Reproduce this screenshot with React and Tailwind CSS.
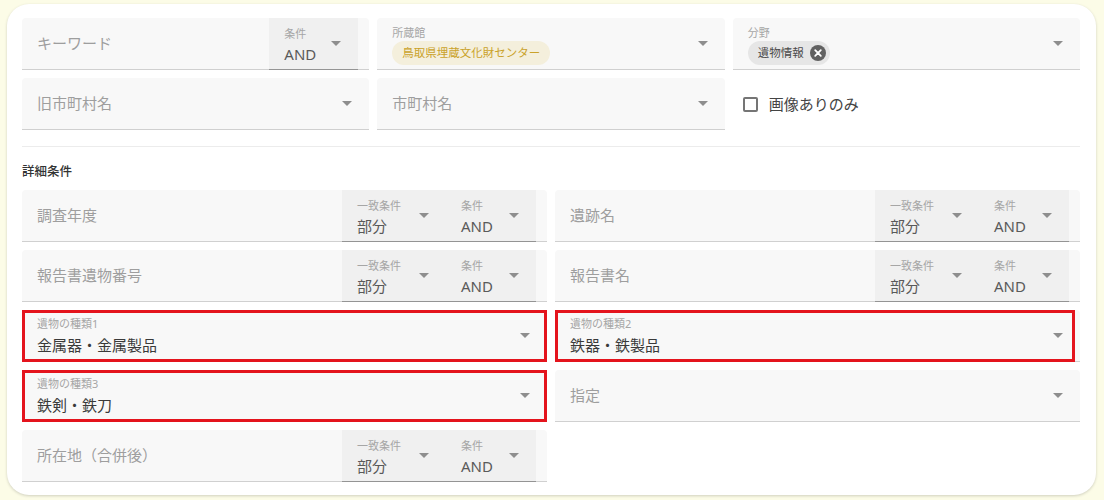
import React from 'react';

const Arrow = () => (
  <svg width="10" height="5" viewBox="0 0 10 5" className="shrink-0 fill-[#8e8e8e]">
    <path d="M0 0h10L5 5z" />
  </svg>
);

// Small select glued to the right of a field (一致条件 / 条件).
const SubSelect = ({ label, value, w }) => (
  <div className={`flex items-center border-b border-[#949494] bg-[#f0f0f0] pl-[15px] pr-[17px] ${w}`}>
    <div className="flex flex-1 flex-col self-start pt-[9px]">
      <span className="text-[11px] leading-[14px] text-[#a6a6a6]">{label}</span>
      <span className="mt-[4px] text-[15px] leading-[18px] text-[#5a5a5a]">{value}</span>
    </div>
    <Arrow />
  </div>
);

const Field = ({ placeholder, label, value, chip, subs, marked }) => (
  <div className="relative flex h-[52px] rounded-t-[4px] bg-[#f8f8f8]">
    <div className={`flex flex-1 items-center border-b border-[#d0d0d0] pl-[15px] ${subs ? '' : 'pr-[17px]'}`}>
      <div className="flex-1 self-stretch">
        {placeholder && (
          <div className="flex h-full items-center text-[15px] text-[#9e9e9e]">{placeholder}</div>
        )}
        {value && (
          <div className="flex flex-col pt-[7px]">
            <span className="text-[11px] leading-[14px] text-[#a6a6a6]">{label}</span>
            <span className="mt-[4px] text-[15px] leading-[20px] text-[#3a3a3a]">{value}</span>
          </div>
        )}
        {chip && (
          <div className="flex flex-col items-start pt-[8px]">
            <span className="text-[11px] leading-[14px] text-[#a6a6a6]">{label}</span>
            {chip}
          </div>
        )}
      </div>
      {!subs && <Arrow />}
    </div>
    {subs}
    {subs && <div className="w-[11px] border-b border-[#d0d0d0]" />}
    {marked && (
      <div
        className={`pointer-events-none absolute inset-y-0 left-0 border-[3px] border-[#e4141d] ${
          marked === 'short' ? 'right-[5px]' : 'right-0'
        }`}
      />
    )}
  </div>
);

const MatchSubs = () => (
  <>
    <SubSelect label="一致条件" value="部分" w="w-[104px]" />
    <SubSelect label="条件" value="AND" w="w-[90px]" />
  </>
);

export default function App() {
  return (
    <div className="h-[500px] bg-[#fcfce7] pl-[7px] pt-[4px] font-['Noto_Sans','Noto_Sans_CJK_JP',sans-serif]">
      <div className="h-[491px] w-[1089px] rounded-[22px] bg-white pl-[15px] pr-[16px] pt-[14px] shadow-[0_1px_3px_rgba(0,0,0,0.18)]">
        {/* Basic conditions */}
        <div className="grid grid-cols-3 gap-2">
          <Field placeholder="キーワード" subs={<SubSelect label="条件" value="AND" w="w-[89px]" />} />
          <Field
            label="所蔵館"
            chip={
              <span className="mt-px flex h-[24px] items-center rounded-full bg-[#f4efdc] px-[10px] text-[11.5px] text-[#caa22a]">
                鳥取県埋蔵文化財センター
              </span>
            }
          />
          <Field
            label="分野"
            chip={
              <span className="mt-px flex h-[24px] items-center gap-[6px] rounded-full bg-[#e6e6e6] pl-[10px] pr-[4px] text-[11.5px] text-[#4a4a4a]">
                遺物情報
                <svg width="16" height="16" viewBox="0 0 16 16">
                  <circle cx="8" cy="8" r="8" fill="#616161" />
                  <path d="M5.2 5.2l5.6 5.6M10.8 5.2l-5.6 5.6" stroke="#fff" strokeWidth="1.8" strokeLinecap="round" />
                </svg>
              </span>
            }
          />
          <Field placeholder="旧市町村名" />
          <Field placeholder="市町村名" />
          <label className="flex h-[52px] items-center gap-[11px] pl-[10px]">
            <span className="h-[15px] w-[15px] rounded-[2px] border-2 border-[#757575]" />
            <span className="text-[15px] text-[#444]">画像ありのみ</span>
          </label>
        </div>

        <div className="mt-4 h-px bg-[#ececec]" />

        <div className="mt-[16px] text-[12.5px] font-medium leading-[18px] text-[#333]">詳細条件</div>

        {/* Detail conditions */}
        <div className="mt-[9px] grid grid-cols-2 gap-2">
          <Field placeholder="調査年度" subs={<MatchSubs />} />
          <Field placeholder="遺跡名" subs={<MatchSubs />} />
          <Field placeholder="報告書遺物番号" subs={<MatchSubs />} />
          <Field placeholder="報告書名" subs={<MatchSubs />} />
          <Field label="遺物の種類1" value="金属器・金属製品" marked="full" />
          <Field label="遺物の種類2" value="鉄器・鉄製品" marked="short" />
          <Field label="遺物の種類3" value="鉄剣・鉄刀" marked="full" />
          <Field placeholder="指定" />
          <Field placeholder="所在地（合併後）" subs={<MatchSubs />} />
        </div>
      </div>
    </div>
  );
}
